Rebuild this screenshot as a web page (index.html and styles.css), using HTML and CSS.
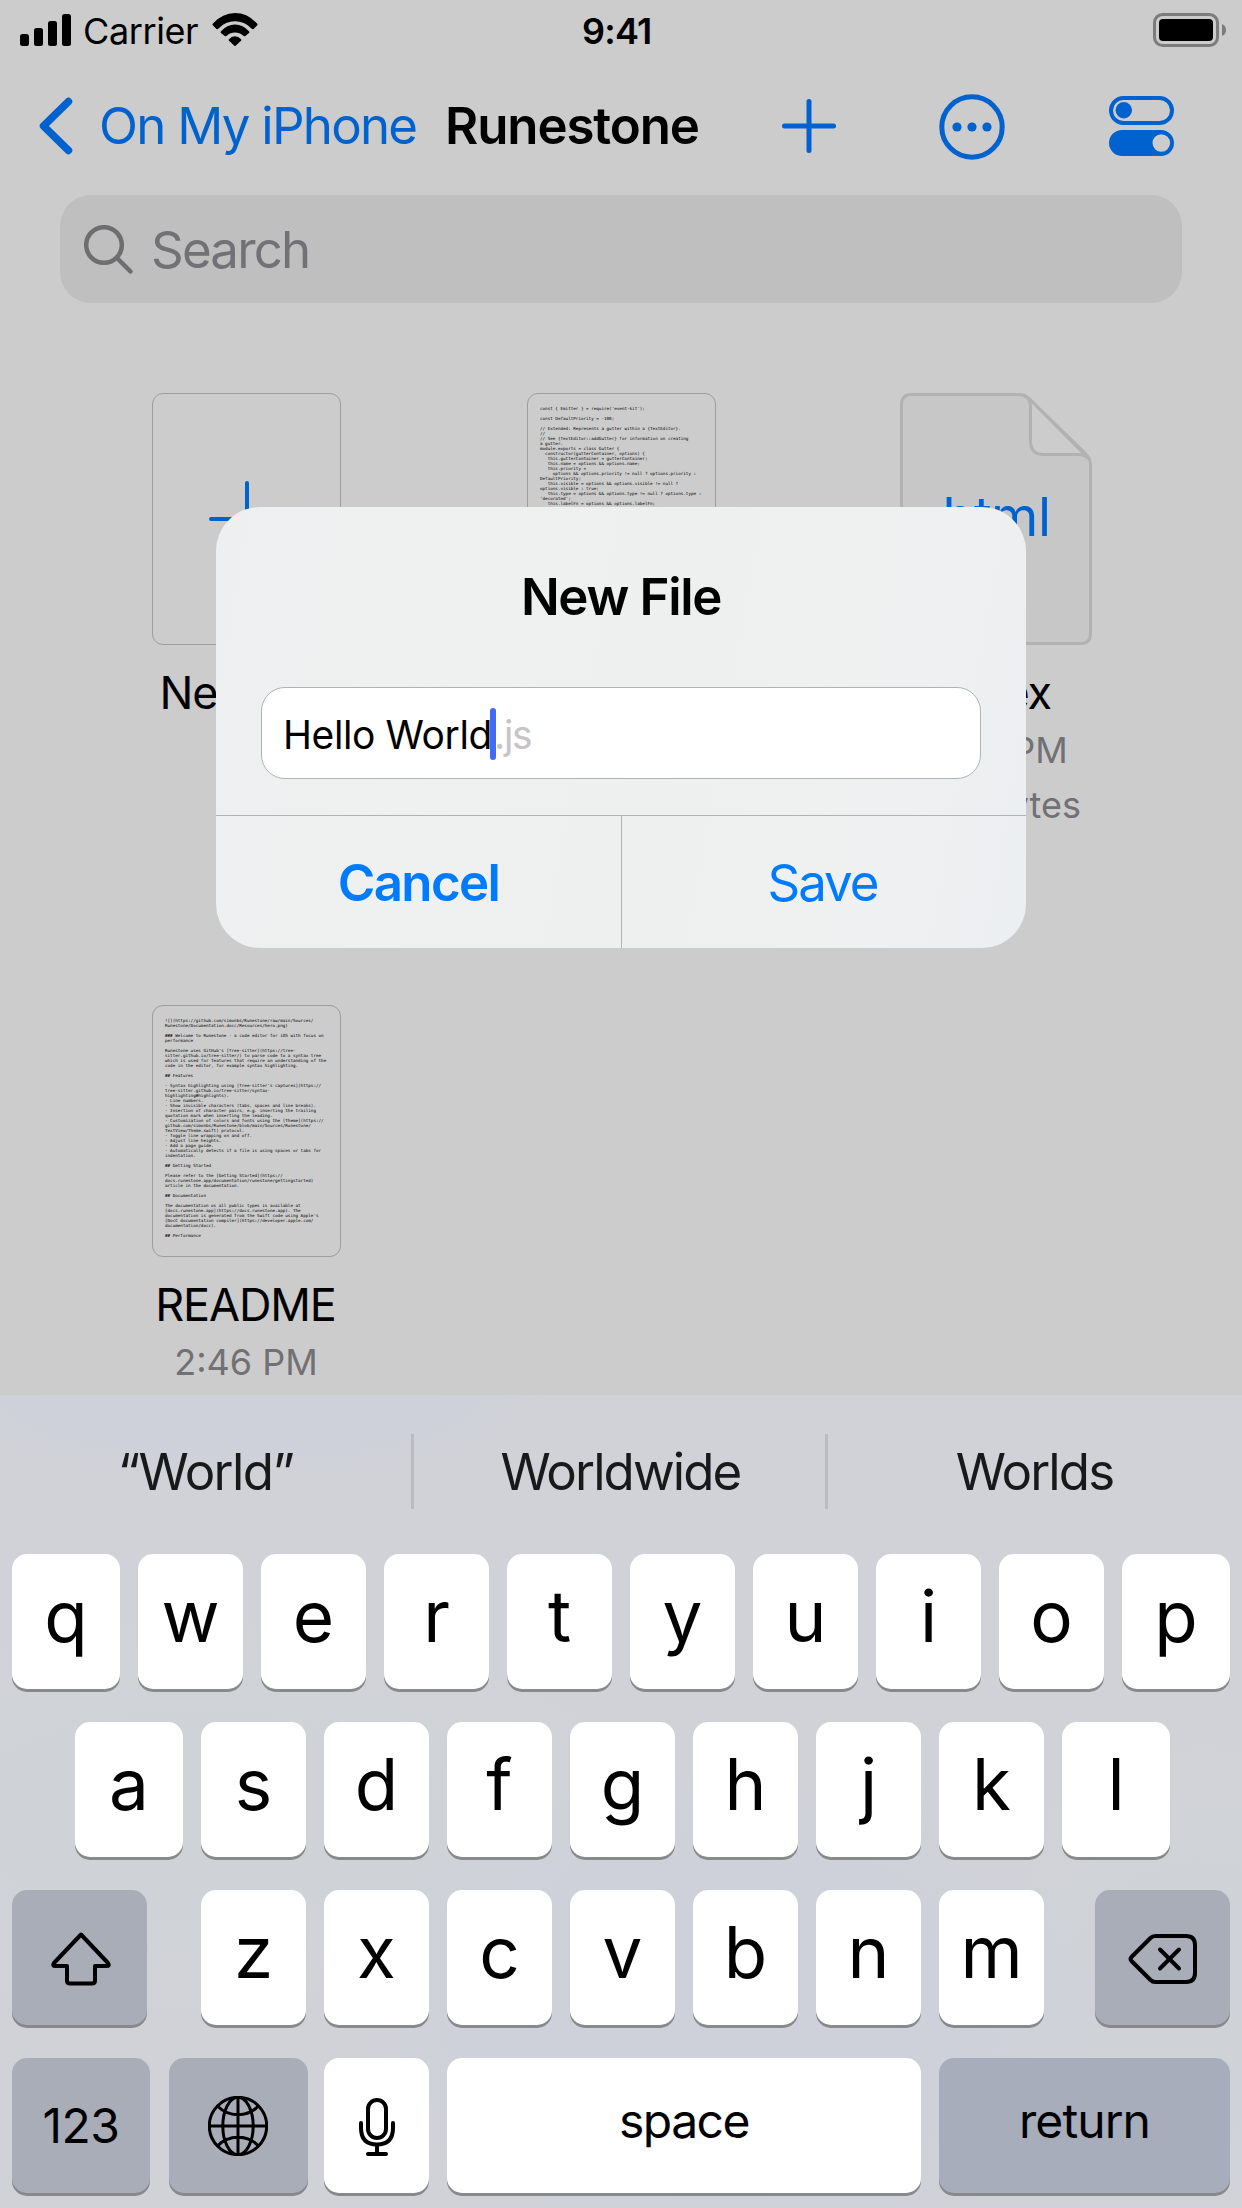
FILE: index.html
```html
<!DOCTYPE html>
<html lang="en">
<head>
<meta charset="utf-8">
<title>Runestone</title>
<link rel="stylesheet" href="styles.css">
</head>
<body>
<div class="screen">
  <header class="status">
    <svg class="signal" width="51" height="32" viewBox="0 0 51 32"><rect x="0" y="20" width="9" height="12" rx="2.5"/><rect x="14" y="14" width="9" height="18" rx="2.5"/><rect x="28" y="7" width="9" height="25" rx="2.5"/><rect x="42" y="0" width="9" height="32" rx="2.5"/></svg>
    <span class="carrier">Carrier</span>
    <svg class="wifi" width="46" height="33" viewBox="0 0 46 33"><path d="M1 10.5Q10.5 0 23 0T45 10.5Q46 11.500 45 12.500L41.500 16Q40.500 16.500 39.500 15.500Q32.500 8.300 23 8.300T6.500 15.500Q5.500 16.500 4.500 16L1 12.500Q0 11.500 1 10.500Z"/><path d="M8.800 18.500Q15 11.500 23 11.500T37.200 18.500Q37.800 19.300 37 20L33.300 23Q32.300 23.600 31.300 22.800Q27.700 19.500 23 19.500T14.700 22.800Q13.700 23.600 12.700 23L9 20Q8.200 19.300 8.800 18.500Z"/><path d="M16.800 26.500Q19.500 23.300 23 23.300T29.200 26.500Q29.600 27.100 29 27.700L23.600 32.700Q23 33.200 22.400 32.700L17 27.700Q16.400 27.100 16.800 26.500Z"/></svg>
    <span class="clock">9:41</span>
    <svg class="battery" width="74" height="34" viewBox="0 0 74 34"><rect x="1.500" y="1.500" width="63" height="31" rx="8" fill="none" stroke="#7c7c7c" stroke-width="3"/><rect x="6" y="6" width="54" height="22" rx="4"/><path d="M69 11Q73 12.500 73 17T69 23Z" fill="#7c7c7c"/></svg>
  </header>

  <nav class="nav">
    <svg class="chevron" width="34" height="58" viewBox="0 0 34 58"><path d="M29.500 4.500L4.500 29L29.500 53.500"/></svg>
    <span class="back">On My iPhone</span>
    <span class="title">Runestone</span>
    <svg class="add" width="54" height="54" viewBox="0 0 54 54"><path d="M27 2.500V51.500M2.500 27H51.500"/></svg>
    <svg class="more" width="66" height="66" viewBox="0 0 66 66"><circle cx="33" cy="33" r="30.200"/><g class="solid"><circle cx="18" cy="33" r="4.600"/><circle cx="33" cy="33" r="4.600"/><circle cx="48" cy="33" r="4.600"/></g></svg>
    <svg class="view" width="66" height="60" viewBox="0 0 66 60"><rect x="2" y="2" width="61" height="25" rx="12.500"/><circle class="solid" cx="14.800" cy="14.300" r="8.200"/><path class="solid" fill-rule="evenodd" d="M13 34H52A13 13 0 0 1 52 60H13A13 13 0 0 1 13 34ZM52.300 38.200A8.800 8.800 0 1 0 52.300 55.800A8.800 8.800 0 1 0 52.300 38.200Z"/></svg>
  </nav>

  <div class="search">
    <svg width="50" height="50" viewBox="0 0 50 50"><circle cx="20" cy="20" r="17.800"/><path d="M33 33L46.500 46.500"/></svg>
    <span class="placeholder">Search</span>
  </div>

  <main class="files">
    <div class="file">
      <div class="page create"><svg width="76" height="76" viewBox="0 0 76 76"><path d="M38 2V74M2 38H74"/></svg></div>
      <div class="name">New File</div>
    </div>
    <div class="file">
      <div class="page"><pre class="code">const { Emitter } = require('event-kit');

const DefaultPriority = -100;

// Extended: Represents a gutter within a {TextEditor}.
//
// See {TextEditor::addGutter} for information on creating
a gutter.
module.exports = class Gutter {
  constructor(gutterContainer, options) {
   this.gutterContainer = gutterContainer;
   this.name = options &amp;&amp; options.name;
   this.priority =
     options &amp;&amp; options.priority != null ? options.priority :
DefaultPriority;
   this.visible = options &amp;&amp; options.visible != null ?
options.visible : true;
   this.type = options &amp;&amp; options.type != null ? options.type :
'decorated';
   this.labelFn = options &amp;&amp; options.labelFn;</pre></div>
      <div class="name">gutter</div>
    </div>
    <div class="file">
      <div class="sheet">
        <svg width="192" height="252" viewBox="0 0 192 252"><path class="body" d="M11.500 1.500H119Q125 1.500 130 6.500L185 60Q190.500 65 190.500 72V240.500Q190.500 250.500 180.500 250.500H11.500Q1.500 250.500 1.500 240.500V11.500Q1.500 1.500 11.500 1.500Z"/><path class="fold" d="M124 2.500Q130.500 6 130.500 14V48Q130.500 61.500 144 61.500H178Q184 61.500 188 65L130 6.500Z"/></svg>
        <span class="ext">html</span>
      </div>
      <div class="name">index</div>
      <div class="meta">2:46 PM</div>
      <div class="meta size">317 bytes</div>
    </div>
    <div class="file">
      <div class="page"><pre class="code">![](https://github.com/simonbs/Runestone/raw/main/Sources/
Runestone/Documentation.docc/Resources/hero.png)

### Welcome to Runestone - a code editor for iOS with focus on
performance

Runestone uses GitHub's [Tree-sitter](https://tree-
sitter.github.io/tree-sitter/) to parse code to a syntax tree
which is used for features that require an understanding of the
code in the editor, for example syntax highlighting.

## Features

- Syntax highlighting using [Tree-sitter's captures](https://
tree-sitter.github.io/tree-sitter/syntax-
highlighting#highlights).
- Line numbers.
- Show invisible characters (tabs, spaces and line breaks).
- Insertion of character pairs, e.g. inserting the trailing
quotation mark when inserting the leading.
- Customization of colors and fonts using the [Theme](https://
github.com/simonbs/Runestone/blob/main/Sources/Runestone/
TextView/Theme.swift) protocol.
- Toggle line wrapping on and off.
- Adjust line heights.
- Add a page guide.
- Automatically detects if a file is using spaces or tabs for
indentation.

## Getting Started

Please refer to the [Getting Started](https://
docs.runestone.app/documentation/runestone/gettingstarted)
article in the documentation.

## Documentation

The documentation os all public types is available at
[docs.runestone.app](https://docs.runestone.app). The
documentation is generated from the Swift code using Apple's
[DocC documentation compiler](https://developer.apple.com/
documentation/docc).

## Performance</pre></div>
      <div class="name readme">README</div>
      <div class="meta">2:46 PM</div>
    </div>
  </main>

  <section class="keyboard">
    <div class="suggestions"><span class="quoted">“World”</span><span>Worldwide</span><span>Worlds</span></div>
    <div class="row first"><b class="key">q</b><b class="key">w</b><b class="key">e</b><b class="key">r</b><b class="key">t</b><b class="key">y</b><b class="key">u</b><b class="key">i</b><b class="key">o</b><b class="key">p</b></div>
    <div class="row second"><b class="key">a</b><b class="key">s</b><b class="key">d</b><b class="key">f</b><b class="key">g</b><b class="key">h</b><b class="key">j</b><b class="key">k</b><b class="key">l</b></div>
    <div class="row third">
      <div class="key dark shift"><svg width="60" height="54" viewBox="0 0 60 54"><path d="M30 2.500L57 31Q59 34 55.500 34H44V48.500Q44 51.500 41 51.500H19Q16 51.500 16 48.500V34H4.500Q1 34 3 31Z"/></svg></div>
      <b class="key">z</b><b class="key">x</b><b class="key">c</b><b class="key">v</b><b class="key">b</b><b class="key">n</b><b class="key">m</b>
      <div class="key dark delete"><svg width="70" height="52" viewBox="0 0 70 52"><path d="M27.500 3H58Q67 3 67 12V40Q67 49 58 49H27.500Q24.500 49 22.500 47L3.500 28Q1.500 26 3.500 24L22.500 5Q24.500 3 27.500 3Z"/><path d="M32 16.500L51 35.500M51 16.500L32 35.500"/></svg></div>
    </div>
    <div class="row fourth">
      <div class="key dark numbers">123</div>
      <div class="key dark globe"><svg width="60" height="60" viewBox="0 0 60 60"><circle cx="30" cy="30" r="28.700"/><ellipse cx="30" cy="30" rx="15.200" ry="28.700"/><path d="M30 1.300V58.700M1.300 30H58.700M10 10.500Q18 18.700 30 18.700T50 10.500M10 49.500Q18 41.300 30 41.300T50 49.500"/></svg></div>
      <div class="key mic"><svg width="36" height="58" viewBox="0 0 36 58"><rect x="9" y="2" width="18" height="38" rx="9"/><path d="M2 25V30Q2 46.500 18 46.500T34 30V25M18 46.500V56M9 56H27"/></svg></div>
      <div class="key word space">space</div>
      <div class="key dark word return">return</div>
    </div>
  </section>

  <div class="alert">
    <h2 class="heading">New File</h2>
    <div class="field"><span class="typed">Hello World</span><i class="caret"></i><span class="suffix">.js</span></div>
    <div class="actions"><span class="cancel">Cancel</span><span class="save">Save</span></div>
  </div>
</div>
</body>
</html>
```
FILE: styles.css
```css
* { box-sizing: border-box; }
body { margin: 0; }
svg { display: block; flex: none; }
.screen {
  position: relative;
  width: 1242px;
  height: 2208px;
  overflow: hidden;
  display: flex;
  flex-direction: column;
  background: #ccc;
  color: #000;
  font-family: Inter, "Liberation Sans", sans-serif;
  white-space: nowrap;
}

.status {
  flex: none;
  display: flex;
  align-items: center;
  height: 60px;
  padding-left: 20px;
  font-size: 36px;
}
.carrier { width: 128px; margin-left: 12px; padding-top: 1px; letter-spacing: -0.4px; }
.wifi { margin-left: 1px; margin-bottom: 1px; }
.clock { width: 90px; margin-left: 324px; padding-top: 1px; font-weight: 600; letter-spacing: -0.8px; }
.battery { margin-left: 481px; }

.nav {
  flex: none;
  display: flex;
  align-items: center;
  height: 132px;
  padding-left: 39px;
  font-size: 51px;
  color: #0062cf;
}
.nav svg { fill: none; stroke: #0062cf; stroke-linecap: round; stroke-linejoin: round; }
.nav .solid { fill: #0062cf; stroke: none; }
.chevron { stroke-width: 7.500px; }
.back { width: 346px; margin-left: 26px; padding-bottom: 1px; letter-spacing: -1.75px; }
.title { width: 336px; padding-bottom: 1px; color: #000; font-weight: 600; letter-spacing: -1.1px; }
.add { margin-left: 1px; stroke-width: 5px; }
.more { margin: 1px 0 0 103px; stroke-width: 5px; }
.view { margin-left: 104px; stroke-width: 4px; }

.search {
  flex: none;
  display: flex;
  align-items: center;
  height: 108px;
  margin: 3px 60px 0;
  padding-left: 24px;
  border-radius: 31px;
  background: #bfbfbf;
  color: #727276;
  font-size: 51px;
}
.search svg { margin-top: 2px; fill: none; stroke: #6e6e70; stroke-width: 4.500px; stroke-linecap: round; }
.placeholder { margin-left: 17px; letter-spacing: -1.8px; }

.files {
  flex: none;
  display: grid;
  grid-template-columns: repeat(3, 375px);
  grid-auto-rows: 612px;
  height: 1002px;
  margin: 90px 0 0 59px;
}
.file { display: flex; flex-direction: column; align-items: center; }
.page {
  flex: none;
  width: 189px;
  height: 252px;
  border: 1px solid #9d9d9d;
  border-radius: 11px;
  overflow: hidden;
}
.create { display: flex; align-items: center; justify-content: center; }
.create svg { fill: none; stroke: #0062cf; stroke-width: 4px; stroke-linecap: round; }
.code {
  margin: 12px 0 0 12px;
  font: 4.260px/5px "DejaVu Sans Mono", "Liberation Mono", monospace;
  color: #000;
}
.sheet { display: grid; width: 192px; height: 252px; margin-right: 2px; place-items: center; }
.sheet > * { grid-area: 1 / 1; }
.body { fill: #c7c7c7; stroke: #b2b2b2; stroke-width: 3px; }
.fold { fill: #ccc; stroke: #b2b2b2; stroke-width: 3px; stroke-linejoin: round; }
.ext { padding: 0 0 4px 2px; color: #0062cf; font-size: 54px; line-height: 60px; letter-spacing: -0.5px; }
.name { margin-top: 18px; font-size: 45px; line-height: 59px; margin-bottom: 1px; letter-spacing: -1.2px; }
.readme { padding-right: 2px; letter-spacing: -1.1px; }
.meta { height: 55px; padding-right: 1px; font-size: 36px; line-height: 55px; color: #717175; }
.meta.size { padding: 0 0 0 8px; }

.keyboard {
  flex: none;
  height: 813px;
  background:
    radial-gradient(ellipse 330px 90px at 240px 0, #ced1da 60%, transparent 100%),
    radial-gradient(ellipse 420px 280px at 720px 620px, #ced1da 50%, transparent 100%),
    radial-gradient(ellipse 460px 200px at 200px 420px, #cfd3d7 50%, transparent 100%),
    radial-gradient(ellipse 240px 260px at 1200px 600px, #cfd3d7 50%, transparent 100%),
    #d1d2d7;
}
.suggestions {
  display: grid;
  grid-template-columns: 414px 414px 414px;
  height: 159px;
  padding-top: 39px;
  font-size: 51px;
  line-height: 76px;
  text-align: center;
  letter-spacing: -1.9px;
  color: #17191a;
}
.suggestions span { height: 75px; padding-left: 2px; border-right: 3px solid #bbbcc1; }
.suggestions .quoted { padding-left: 0; letter-spacing: -1.6px; }
.suggestions span:last-child { border-color: transparent; }
.row { display: flex; gap: 18px; height: 168px; padding: 0 12px; }
.second { padding-left: 75px; }
.key {
  flex: none;
  display: flex;
  align-items: center;
  justify-content: center;
  width: 105px;
  height: 135px;
  padding-bottom: 12px;
  border-radius: 15px;
  background: #fff;
  box-shadow: 0 3px 0 #87898d;
  font-size: 71px;
  font-weight: 400;
}
.first .key:first-child, .first .key:last-child,
.second .key:first-child, .second .key:last-child { width: 108px; }
.key svg { fill: none; stroke: #000; stroke-width: 4px; stroke-linejoin: round; stroke-linecap: round; }
.key.dark { padding: 0; background: #a8adb8; }
.third .shift { width: 135px; margin-right: 36px; padding: 2px 0 0 3px; }
.third .delete { width: 135px; margin-left: 33px; padding: 2px 0 0; }
.fourth .numbers { width: 138px; font-size: 48px; letter-spacing: -0.4px; }
.fourth .globe { width: 139px; margin: 0 -2px 0 1px; padding-right: 2px; }
.globe svg { stroke-width: 3px; }
.key.mic { padding: 3px 0 0; }
.key.word { padding: 0 0 10px; font-size: 48px; letter-spacing: -1.5px; }
.fourth .space { width: 474px; }
.fourth .return { width: 291px; background: #a7adba; letter-spacing: -0.9px; }

.alert {
  position: absolute;
  left: 216px;
  top: 507px;
  width: 810px;
  height: 441px;
  display: flex;
  flex-direction: column;
  border-radius: 44px;
  background: linear-gradient(100deg, #edeff1, #eff1f0 25%, #eeefef 55%, #eff1f1 75%, #eceff1);
  overflow: hidden;
}
.heading { margin: 60px 0 60px; font-size: 51px; line-height: 60px; font-weight: 600; text-align: center; letter-spacing: -1.3px; }
.field {
  display: flex;
  align-items: center;
  width: 720px;
  height: 92px;
  margin-left: 45px;
  padding: 2px 0 0 21px;
  border: 1px solid #b1b3b3;
  border-radius: 24px;
  background: #fff;
  font-size: 39px;
}
.typed { width: 207px; letter-spacing: -0.4px; }
.caret { width: 6px; height: 52px; border-radius: 3px; background: #436bf5; z-index: 1; }
.suffix { margin-left: -2px; color: #c5c5c7; letter-spacing: -1.3px; }
.actions { display: grid; grid-template-columns: 406px 404px; height: 133px; margin-top: 36px; border-top: 1px solid #b0b3b4; font-size: 51px; line-height: 133px; text-align: center; color: #007aff; }
.cancel { border-right: 1px solid #b0b3b4; font-weight: 600; letter-spacing: -1.6px; }
.save { padding-right: 3px; letter-spacing: -2px; }
```
